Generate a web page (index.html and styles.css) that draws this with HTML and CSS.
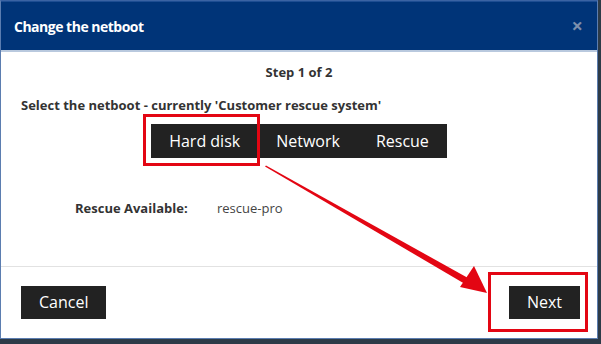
FILE: index.html
```html
<!DOCTYPE html>
<html lang="en">
<head>
    <meta charset="UTF-8">
    <title>Change the netboot</title>
    <link rel="stylesheet" href="styles.css">
</head>
<body>
    <div class="modal">
        <div class="modal-header">
            <span class="modal-title">Change the netboot</span>
            <span class="close">&times;</span>
        </div>
        <div class="modal-body">
            <div class="step">Step 1 of 2</div>
            <div class="select-label">Select the netboot - currently 'Customer rescue system'</div>
            <div class="btn-group">
                <div class="btn">Hard disk</div>
                <div class="btn">Network</div>
                <div class="btn">Rescue</div>
            </div>
            <div class="info-row">
                <span class="info-label">Rescue Available:</span>
                <span class="info-value">rescue-pro</span>
            </div>
        </div>
        <div class="modal-footer">
            <div class="btn">Cancel</div>
            <div class="btn">Next</div>
        </div>
    </div>

    <!-- annotation drawn over the screenshot -->
    <svg class="annotations" width="601" height="344" viewBox="0 0 601 344">
        <rect x="144.5" y="115.5" width="114" height="49" fill="none" stroke="#e30613" stroke-width="3"/>
        <rect x="489.5" y="273.5" width="97" height="57" fill="none" stroke="#e30613" stroke-width="3"/>
        <polygon points="265,166.5 266,165.5 468,278 465,284" fill="#e30613"/>
        <polygon points="487,293 460,287 474,266" fill="#e30613"/>
    </svg>
</body>
</html>
```

FILE: styles.css
```css
body {
    margin: 0;
    width: 601px;
    height: 344px;
    background-color: #2d3b48;
    overflow: hidden;
    font-family: "Open Sans", Arial, sans-serif;
    position: relative;
}
.modal {
    width: 596px;
    height: 337px;
    background-color: #fff;
    border: 1px solid #5b7db0;
    border-top-color: #3a63a3;
    display: flex;
    flex-direction: column;
}
.modal-header {
    height: 48px;
    background-color: #003478;
    border-top: 1px solid #1d4d92;
    border-bottom: 2px solid #b9c9de;
    display: flex;
    align-items: center;
    justify-content: space-between;
    padding: 0 14px 0 13px;
}
.modal-title {
    color: #fff;
    font-size: 14px;
    font-weight: bold;
    letter-spacing: -0.5px;
}
.close {
    color: #7d8fac;
    font-size: 20px;
    font-weight: bold;
    line-height: 1;
}
.modal-body {
    flex: 1;
    padding: 10px 20px 0 20px;
    border-bottom: 1px solid #e2e2e2;
}
.step {
    text-align: center;
    font-size: 13px;
    font-weight: bold;
    color: #333;
    line-height: 20px;
}
.select-label {
    margin-top: 13px;
    font-size: 13px;
    font-weight: bold;
    color: #333;
    line-height: 20px;
}
.btn-group {
    display: flex;
    justify-content: center;
    margin-top: 9px;
}
.btn {
    background-color: #222;
    color: #fff;
    font-size: 16px;
    height: 34px;
    line-height: 34px;
    padding: 0 18px;
}
.info-row {
    margin-top: 40px;
    margin-left: 54px;
    font-size: 13px;
    line-height: 20px;
    display: flex;
}
.info-label {
    font-weight: bold;
    color: #333;
    width: 142px;
}
.info-value {
    color: #444;
}
.modal-footer {
    height: 71px;
    display: flex;
    align-items: center;
    justify-content: space-between;
    padding: 0 17px 0 20px;
}
.modal-footer .btn {
    height: 33px;
    line-height: 33px;
    padding: 0 18px;
}
.annotations {
    position: absolute;
    left: 0;
    top: 0;
}
```
